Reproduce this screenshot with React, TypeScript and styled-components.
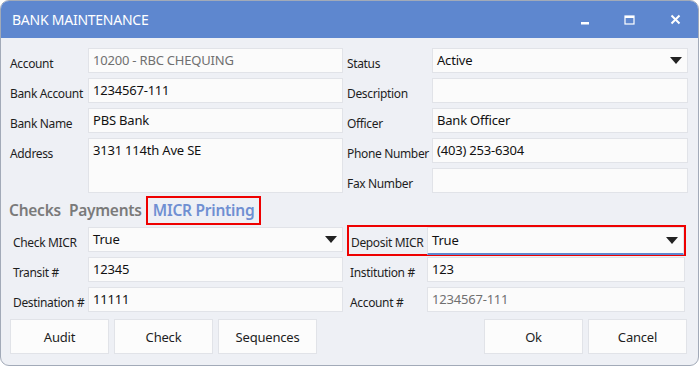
import React from "react";
import styled, { createGlobalStyle } from "styled-components";

const GlobalStyle = createGlobalStyle`
  html, body {
    margin: 0;
    padding: 0;
    background: #ffffff;
  }
  * {
    box-sizing: border-box;
  }
`;

const Window = styled.div`
  width: 699px;
  height: 366px;
  border: 1px solid #a2aab8;
  border-radius: 9px;
  overflow: hidden;
  background-color: #eef0f5;
  display: flex;
  flex-direction: column;
  font-family: "Noto Sans", "Open Sans", sans-serif;
`;

const TitleBar = styled.div`
  height: 37px;
  background-color: #5e87cf;
  display: flex;
  align-items: center;
  padding: 0 0 0 11px;
  color: #ffffff;
`;

const Title = styled.div`
  flex: 1;
  font: normal 400 14px/20px "Noto Sans", sans-serif;
  letter-spacing: -0.25px;
  margin-top: 1px;
`;

const TitleButton = styled.div`
  width: 46px;
  height: 37px;
  display: flex;
  align-items: center;
  justify-content: center;
`;

const Body = styled.div`
  flex: 1;
  padding: 10px 9px 0 9px;
  display: flex;
  flex-direction: column;
`;

const TopSection = styled.div`
  display: grid;
  grid-template-columns: 333px 341px;
  column-gap: 4px;
`;

const FieldGrid = styled.div<{ labelWidth: number }>`
  display: grid;
  grid-template-columns: ${(p) => p.labelWidth}px 1fr;
  grid-auto-rows: 25px;
  row-gap: 5px;
`;

const Label = styled.div<{ indent?: number }>`
  font: normal 400 12px/25px "Noto Sans", sans-serif;
  letter-spacing: -0.35px;
  color: #1e1e1e;
  white-space: nowrap;
  padding-left: ${(p) => p.indent || 0}px;
  padding-top: 3px;
`;

const Input = styled.div<{ muted?: boolean; tall?: boolean }>`
  background-color: #fbfbfb;
  border: 1px solid #e1e3e8;
  font: normal 400 13px/23px "Noto Sans", sans-serif;
  letter-spacing: -0.2px;
  color: ${(p) => (p.muted ? "#707070" : "#111111")};
  padding: 0 5px 0 4px;
  grid-row: ${(p) => (p.tall ? "span 2" : "auto")};
  white-space: nowrap;
  overflow: hidden;
`;

const Select = styled(Input)<{ focused?: boolean }>`
  display: flex;
  align-items: center;
  justify-content: space-between;
  padding-right: 5px;
  border-bottom: ${(p) => (p.focused ? "2px solid #5e87cf" : "1px solid #e1e3e8")};
`;

const Arrow = styled.div`
  width: 0;
  height: 0;
  border-left: 6.5px solid transparent;
  border-right: 6.5px solid transparent;
  border-top: 7px solid #222222;
`;

const Tabs = styled.div`
  height: 34px;
  display: flex;
  align-items: center;
  margin-left: -5px;
`;

const Tab = styled.div<{ active?: boolean }>`
  font: normal 600 15.5px/20px "Noto Sans", sans-serif;
  letter-spacing: -0.25px;
  color: ${(p) => (p.active ? "#6f8fd2" : "#7a7a7a")};
  padding: ${(p) => (p.active ? "2px 5px 3px 5px" : "2px 2px 3px 2px")};
  border: 2px solid ${(p) => (p.active ? "#ee0000" : "transparent")};
`;

const MicrSection = styled.div`
  display: grid;
  grid-template-columns: 333px 338px;
  column-gap: 4px;
`;

const Highlight = styled.div`
  grid-column: 1 / 3;
  display: grid;
  grid-template-columns: 76px 1fr;
  border: 2px solid #ee0000;
  margin: -2px -1px -4px 0;
  padding: 0 0 2px 2px;
  height: 31px;
`;

const ButtonRow = styled.div`
  display: flex;
  justify-content: space-between;
  margin-top: 7px;
  padding-right: 2px;
`;

const ButtonGroup = styled.div`
  display: flex;
  gap: 5px;
`;

const Button = styled.div`
  width: 99px;
  height: 35px;
  background-color: #fcfcfc;
  border: 1px solid #e1e3e8;
  display: flex;
  align-items: center;
  justify-content: center;
  font: normal 400 13px/20px "Noto Sans", sans-serif;
  letter-spacing: -0.2px;
  color: #1e1e1e;
`;

function App() {
  return (
    <>
      <GlobalStyle />
      <Window>
        <TitleBar>
          <Title>BANK MAINTENANCE</Title>
          <TitleButton>
            <svg width="10" height="10" viewBox="0 0 10 10" style={{ marginLeft: 4 }}>
              <rect x="1" y="7" width="8" height="2.5" fill="#fff" />
            </svg>
          </TitleButton>
          <TitleButton>
            <svg width="11" height="10" viewBox="0 0 11 10">
              <rect x="1" y="1" width="9" height="8" fill="none" stroke="#fff" strokeWidth="1.2" />
              <rect x="1" y="1" width="9" height="2" fill="#fff" />
            </svg>
          </TitleButton>
          <TitleButton>
            <svg width="11" height="11" viewBox="0 0 11 11">
              <path d="M1.5 1.5 L9.5 9.5 M9.5 1.5 L1.5 9.5" stroke="#fff" strokeWidth="2" />
            </svg>
          </TitleButton>
        </TitleBar>
        <Body>
          <TopSection>
            <FieldGrid labelWidth={78}>
              <Label>Account</Label>
              <Input muted>10200 - RBC CHEQUING</Input>
              <Label>Bank Account</Label>
              <Input>1234567-111</Input>
              <Label>Bank Name</Label>
              <Input>PBS Bank</Input>
              <Label>Address</Label>
              <Input tall>3131 114th Ave SE</Input>
            </FieldGrid>
            <FieldGrid labelWidth={85}>
              <Label>Status</Label>
              <Select>
                Active
                <Arrow />
              </Select>
              <Label>Description</Label>
              <Input />
              <Label>Officer</Label>
              <Input>Bank Officer</Input>
              <Label>Phone Number</Label>
              <Input>(403) 253-6304</Input>
              <Label>Fax Number</Label>
              <Input />
            </FieldGrid>
          </TopSection>
          <Tabs>
            <Tab>Checks</Tab>
            <Tab>Payments</Tab>
            <Tab active>MICR Printing</Tab>
          </Tabs>
          <MicrSection>
            <FieldGrid labelWidth={78}>
              <Label indent={3}>Check MICR</Label>
              <Select>
                True
                <Arrow />
              </Select>
              <Label indent={3}>Transit #</Label>
              <Input>12345</Input>
              <Label indent={3}>Destination #</Label>
              <Input>11111</Input>
            </FieldGrid>
            <FieldGrid labelWidth={80}>
              <Highlight>
                <Label>Deposit MICR</Label>
                <Select focused>
                  True
                  <Arrow />
                </Select>
              </Highlight>
              <Label indent={3}>Institution #</Label>
              <Input>123</Input>
              <Label indent={3}>Account #</Label>
              <Input muted>1234567-111</Input>
            </FieldGrid>
          </MicrSection>
          <ButtonRow>
            <ButtonGroup>
              <Button>Audit</Button>
              <Button>Check</Button>
              <Button>Sequences</Button>
            </ButtonGroup>
            <ButtonGroup>
              <Button>Ok</Button>
              <Button>Cancel</Button>
            </ButtonGroup>
          </ButtonRow>
        </Body>
      </Window>
    </>
  );
}

export default App;
